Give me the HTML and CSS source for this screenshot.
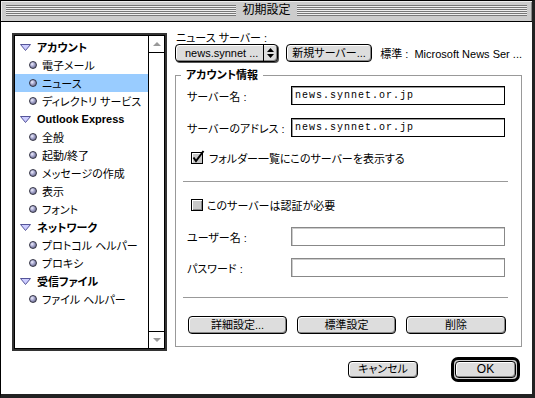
FILE: index.html
```html
<!DOCTYPE html>
<html>
<head>
    <title>初期設定</title>
    <link rel="stylesheet" href="styles.css">
</head>
<body>
<div class="window">
    <div class="titlebar">
        <div class="stripes"><span class="title">初期設定</span></div>
    </div>
    <div class="content">
        <div class="main">
            <div class="listbox">
                <div class="listinner">
                    <ul class="tree">
                        <li class="row head"><svg class="tri" width="11" height="7"><polygon points="0.5,0.5 10.5,0.5 5.5,6.5" fill="#ccccff" stroke="#555599"/></svg>アカウント</li>
                        <li class="row item"><span class="dot"></span>電子メール</li>
                        <li class="row item sel"><span class="dot"></span>ニュース</li>
                        <li class="row item"><span class="dot"></span>ディレクトリ サービス</li>
                        <li class="row head latin"><svg class="tri" width="11" height="7"><polygon points="0.5,0.5 10.5,0.5 5.5,6.5" fill="#ccccff" stroke="#555599"/></svg>Outlook Express</li>
                        <li class="row item"><span class="dot"></span>全般</li>
                        <li class="row item"><span class="dot"></span>起動/終了</li>
                        <li class="row item"><span class="dot"></span>メッセージの作成</li>
                        <li class="row item"><span class="dot"></span>表示</li>
                        <li class="row item"><span class="dot"></span>フォント</li>
                        <li class="row head"><svg class="tri" width="11" height="7"><polygon points="0.5,0.5 10.5,0.5 5.5,6.5" fill="#ccccff" stroke="#555599"/></svg>ネットワーク</li>
                        <li class="row item"><span class="dot"></span>プロトコル ヘルパー</li>
                        <li class="row item"><span class="dot"></span>プロキシ</li>
                        <li class="row head"><svg class="tri" width="11" height="7"><polygon points="0.5,0.5 10.5,0.5 5.5,6.5" fill="#ccccff" stroke="#555599"/></svg>受信ファイル</li>
                        <li class="row item"><span class="dot"></span>ファイル ヘルパー</li>
                    </ul>
                    <div class="scrollbar">
                        <div class="arrow up"><span class="tri-up"></span></div>
                        <div class="track"></div>
                        <div class="arrow down"><span class="tri-down"></span></div>
                    </div>
                </div>
            </div>

            <div class="panel">
                <div class="srv-label">ニュース サーバー :</div>
                <div class="srv-row">
                    <div class="popup">
                        <span class="popup-text">news.synnet ...</span>
                        <span class="popup-arrows">
                            <svg width="7" height="10"><polygon points="3.5,0 7,4 0,4" fill="#000"/><polygon points="0,6 7,6 3.5,10" fill="#000"/></svg>
                        </span>
                    </div>
                    <button class="btn new">新規サーバー...</button>
                    <span class="std">標準 :&nbsp;&nbsp;<span class="latin">Microsoft News Ser ...</span></span>
                </div>

                <fieldset class="group">
                    <legend>アカウント情報</legend>
                    <div class="field">
                        <label>サーバー名 :</label>
                        <input type="text" class="text" value="news.synnet.or.jp" readonly>
                    </div>
                    <div class="field f2">
                        <label>サーバーのアドレス :</label>
                        <input type="text" class="text" value="news.synnet.or.jp" readonly>
                    </div>
                    <div class="check c1">
                        <svg class="cb" width="15" height="15">
                            <rect x="0.5" y="2.5" width="11" height="11" fill="#c8c8c8" stroke="#000"/>
                            <line x1="1.5" y1="3.5" x2="10.5" y2="3.5" stroke="#fff"/>
                            <line x1="1.5" y1="3.5" x2="1.5" y2="12.5" stroke="#fff"/>
                            <path d="M2.5 7.5 L5 11 L12.5 1" fill="none" stroke="#000" stroke-width="2"/>
                        </svg>
                        フォルダー一覧にこのサーバーを表示する
                    </div>
                    <div class="sep s1"></div>
                    <div class="check c2">
                        <span class="box"></span>
                        このサーバーは認証が必要
                    </div>
                    <div class="field f3">
                        <label>ユーザー名 :</label>
                        <input type="text" class="text off" disabled>
                    </div>
                    <div class="field f4">
                        <label>パスワード :</label>
                        <input type="text" class="text off" disabled>
                    </div>
                    <div class="sep s2"></div>
                    <div class="actions">
                        <button class="btn wide">詳細設定...</button>
                        <button class="btn wide">標準設定</button>
                        <button class="btn wide last">削除</button>
                    </div>
                </fieldset>
            </div>
        </div>

        <div class="footer">
            <button class="btn cancel">キャンセル</button>
            <div class="ring"><button class="btn ok">OK</button></div>
        </div>
    </div>
</div>
</body>
</html>
```

FILE: styles.css
```css
body{
    margin: 0;
    font-family: "Liberation Sans", "Noto Sans CJK JP", sans-serif;
    font-size: 11px;
    font-feature-settings: "palt";
    color: #000;
}
.window{
    width: 535px;
    height: 398px;
    box-sizing: border-box;
    border-left: 1px solid #000;
    border-top: 1px solid #000;
    border-right: 3px solid #222;
    border-bottom: 4px solid #222;
    background: #fff;
    display: flex;
    flex-direction: column;
}
.titlebar{
    height: 21px;
    box-sizing: border-box;
    background: #cccccc;
    border-bottom: 1px solid #000;
    padding: 4px 5px 0 5px;
    box-shadow: inset 1px 1px #eee, inset -1px 0 #888;
}
.stripes{
    height: 11px;
    background: repeating-linear-gradient(to bottom, #777 0 1px, #eee 1px 2px);
    display: flex;
    justify-content: center;
}
.title{
    background: #cccccc;
    padding: 0 6px;
    font-size: 12px;
    line-height: 11px;
}
.content{
    flex: 1;
    padding: 11px 10px 0 11px;
}
.main{
    display: flex;
    gap: 8px;
}

/* list on the left */
.listbox{
    width: 155px;
    height: 318px;
    flex-shrink: 0;
    box-sizing: border-box;
    border: 2px solid #333;
}
.listinner{
    height: 100%;
    box-sizing: border-box;
    border: 1px solid #000;
    display: flex;
}
.tree{
    flex: 1;
    margin: 0;
    padding: 2px 0 0 0;
    list-style: none;
}
.row{
    height: 18px;
    display: flex;
    align-items: center;
    white-space: nowrap;
}
.head{
    padding-left: 5px;
    font-weight: bold;
}
.head .tri{
    margin-right: 6px;
}
.item{
    padding-left: 14px;
}
.sel{
    background: #99ccff;
}
.dot{
    width: 6px;
    height: 6px;
    border: 1px solid #333344;
    border-radius: 50%;
    background: radial-gradient(circle at 35% 35%, #f0f0ff 0, #a0a0c8 45%, #50506a 100%);
    margin-right: 5px;
}
.scrollbar{
    width: 15px;
    border-left: 1px solid #000;
    display: flex;
    flex-direction: column;
}
.arrow{
    height: 16px;
    display: flex;
    align-items: center;
    justify-content: center;
}
.arrow.up{
    border-bottom: 1px solid #000;
}
.arrow.down{
    border-top: 1px solid #000;
}
.track{
    flex: 1;
}
.tri-up{
    border-left: 4px solid transparent;
    border-right: 4px solid transparent;
    border-bottom: 4px solid #999;
}
.tri-down{
    border-left: 4px solid transparent;
    border-right: 4px solid transparent;
    border-top: 4px solid #999;
}

/* right panel */
.panel{
    width: 347px;
    flex-shrink: 0;
    display: flex;
    flex-direction: column;
}
.srv-label{
    height: 11px;
    line-height: 11px;
    padding-left: 1px;
}
.srv-row{
    display: flex;
    align-items: center;
    height: 18px;
    gap: 8px;
    white-space: nowrap;
}
.popup{
    width: 104px;
    height: 18px;
    box-sizing: border-box;
    border: 1px solid #000;
    border-radius: 4px;
    background: #dddddd;
    box-shadow: inset 1px 1px #fff, inset -1px -1px #888, 1px 1px 0 #555;
    display: flex;
    align-items: center;
}
.popup-text{
    flex: 1;
    padding-left: 9px;
}
.popup-arrows{
    width: 13px;
    height: 100%;
    border-left: 1px solid #000;
    display: flex;
    align-items: center;
    justify-content: center;
}
.btn{
    font: inherit;
    color: #000;
    background: #dddddd;
    border: 1px solid #000;
    border-radius: 4px;
    box-shadow: inset 1px 1px #fff, inset -1px -1px #888;
    padding: 0;
    height: 18px;
    line-height: 16px;
}
.btn.new{
    width: 87px;
}

.group{
    margin: 7px 0 0 0;
    padding: 5px 11px 11px 11px;
    border: 1px solid #999;
    height: 278px;
    box-sizing: border-box;
    min-width: 0;
}
.group legend{
    padding: 0 5px;
    margin-left: -6px;
    font-weight: bold;
    line-height: 12px;
}
.field{
    display: flex;
    align-items: center;
    height: 19px;
}
.field label{
    width: 104px;
    white-space: nowrap;
}
.text{
    width: 214px;
    height: 19px;
    box-sizing: border-box;
    margin: 0;
    border: 1px solid #000;
    box-shadow: inset 1px 1px #999;
    background: #fff;
    padding: 0 0 0 3px;
    font-family: "Liberation Mono", monospace;
    font-size: 10px;
    letter-spacing: 1px;
    outline: none;
}
.text.off{
    border-color: #888;
    box-shadow: inset 1px 1px #ccc;
}
.f2{ margin-top: 13px; }
.f3{ margin-top: 15px; }
.f4{ margin-top: 12px; }
.check{
    display: flex;
    align-items: center;
    height: 14px;
    padding-left: 4px;
    gap: 3px;
    white-space: nowrap;
}
.c1{ margin-top: 14px; }
.c1 .cb{
    margin-top: -2px;
}
.c2{ margin-top: 16px; }
.box{
    width: 12px;
    height: 12px;
    box-sizing: border-box;
    border: 1px solid #000;
    background: #c8c8c8;
    box-shadow: inset 1px 1px #fff, inset -1px -1px #888;
    margin-right: 1px;
}
.sep{
    height: 1px;
    background: #999;
    margin: 0 2px 0 -4px;
}
.s1{ margin-top: 16px; }
.s2{ margin-top: 20px; }
.actions{
    display: flex;
    gap: 10px;
    margin: 18px 0 0 1px;
}
.btn.wide{
    width: 99px;
}
.btn.wide.last{
    width: 100px;
}

/* bottom buttons */
.footer{
    display: flex;
    justify-content: flex-end;
    align-items: center;
    margin-top: 6px;
    padding-right: 2px;
}
.btn.cancel{
    width: 70px;
    height: 17px;
    line-height: 15px;
    margin-right: 33px;
}
.ring{
    border: 3px solid #000;
    border-radius: 7px;
    padding: 1px;
    background: #cccccc;
    display: flex;
}
.btn.ok{
    width: 61px;
    height: 17px;
    line-height: 15px;
    font-size: 12px;
}
.latin{
    font-family: "Liberation Sans", sans-serif;
}
```
